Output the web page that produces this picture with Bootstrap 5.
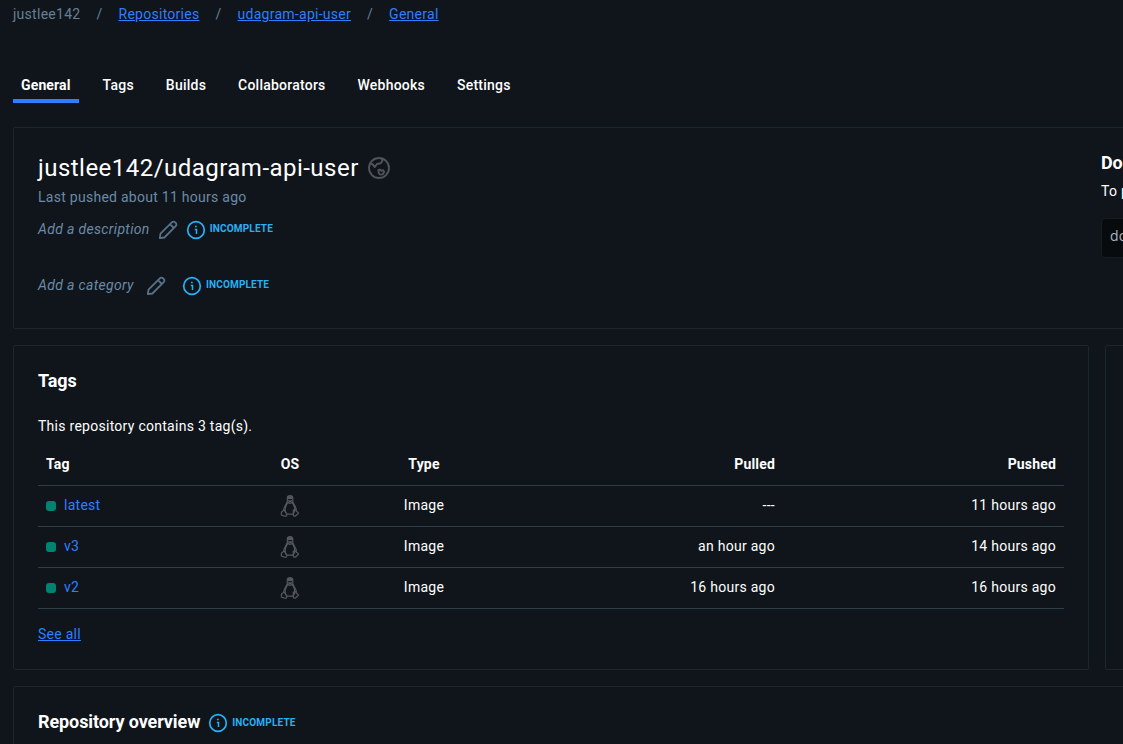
<!DOCTYPE html>
<html lang="en" data-bs-theme="dark">
<head>
<meta charset="utf-8">
<meta name="viewport" content="width=device-width, initial-scale=1">
<title>justlee142/udagram-api-user</title>
<link href="https://cdn.jsdelivr.net/npm/bootstrap@5.3.0/dist/css/bootstrap.min.css" rel="stylesheet">
<style>
html, body { overflow: hidden; height: 100%; }
body { background: #10151b; color: #fff; font: 400 14px/20px Roboto, "Liberation Sans", sans-serif; letter-spacing: .27px; }
.page { width: 1480px; padding: 4px 0 0 13px; }
a { color: #2e7fff; }
.crumbs { color: #677f93; gap: 16px; }
.tabs { gap: 16px; margin-top: 45px; font-weight: 500; }
.tabs .nav-link { color: #fff; padding: 6px 8px 4px; border-bottom: 4px solid transparent; letter-spacing: .23px; }
.tabs .nav-link.active { border-color: #2e7fff; font-weight: 700; letter-spacing: .14px; }
.panel { border: 1px solid #1c262d; border-radius: 2px; padding: 24px; background: #10151b; }
.head-panel { height: 202px; margin-top: 24px; }
.head-main { width: 1063px; }
.repo-name { font-size: 24px; line-height: 32px; font-weight: 400; letter-spacing: .47px; }
.muted { color: #6b8aa7; }
.pen-icon { color: #587187; }
em { letter-spacing: .34px; }
.pushed { margin-top: 3px; }
.desc { margin-top: 11px; }
.categ { margin-top: 34px; }
.low { margin-top: 2px; }
.flag { color: #27b1f5; font-size: 10px; font-weight: 700; letter-spacing: .17px; gap: 4px; }
h2 { font-size: 18px; line-height: 24px; font-weight: 700; letter-spacing: -.1px; }
.side-title { margin: -1px 0 6px; }
.push-hint { margin: 0 0 17px; }
.cmd { background: #080b0e; border: 1px solid #171d22; border-radius: 4px; height: 40px; padding: 7px 8px; color: #a9b6c2; font: 14px/20px "Open Sans", sans-serif; width: 330px; }
.tags-panel { width: 1076px; height: 325px; }
.tags-panel h2 { margin: -1px 0 23px; }
.side-panel { width: 345px; }
.overview h2 { margin: -1px 0 1px; }
.tag-table { width: 1026px; table-layout: fixed; border-collapse: collapse; }
.tag-table th, .tag-table td { height: 41px; padding: 0 8px 2px; border-bottom: 1px solid #2b3e4a; vertical-align: middle; font-weight: 500; letter-spacing: .27px; }
.tag-table th { padding-bottom: 0; font-weight: 700; letter-spacing: .17px; }
.tag-table td { font-weight: 400; }
.dot { width: 10px; height: 10px; border-radius: 3px; background: #008471; margin: 2px 8px 0 0; }
.see-all { margin-top: 15px; }
svg { display: block; flex: none; fill: none; stroke: currentColor; }
.tux { color: #55585c; margin: 3px auto 0; }
</style>
</head>
<body>
<svg width="0" height="0" class="position-absolute" aria-hidden="true">
  <symbol id="pen" viewBox="0 0 20 20"><path d="M1.8 18.2l.7-4.6L13.8 2.3a2.3 2.3 0 0 1 3.3 0l.6.6a2.3 2.3 0 0 1 0 3.3L6.4 17.5zM12 4.1l3.9 3.9" stroke-width="1.8" stroke-linejoin="round"/></symbol>
  <symbol id="info" viewBox="0 0 20 20"><circle cx="10" cy="10" r="8.3" stroke-width="1.7"/><path d="M8.8 9.400h1.700V14M9 6.600h1.700" stroke-width="1.500"/></symbol>
  <symbol id="tux" viewBox="0 0 20 24"><g stroke-width="1.2" stroke-linejoin="round"><path d="M7.3 8V4.3C7.3 2.500 8.300 1.500 10 1.500s2.800 1 2.800 2.800V8c.6 2 3.600 4.500 3.600 8.600M7.300 8c-.6 2-3.700 4.500-3.700 8.400"/><path d="M7.600 8.300c1.600 1.300 3.200 1.300 4.900 0 .7 2.300 2.300 3.500 2.300 7.200 0 2-.8 3.500-1.700 4.600H7c-1.200-1.200-1.900-2.600-1.900-4.600 0-3.200 1.800-5 2.500-7.200z"/><path d="M4 15.800l2.700 4.200c.5 1.500-.5 2.400-1.800 2.200l-3.400-1.100c-.6-.5 0-1.600-.1-2.700 0-.8 1.500-.7 2.600-2.600zM15.800 15.800c.3 2 1.700 2 2.700 3-.2 1.200-1.700 1.600-2.800 3-1 .8-2.400.4-2.400-1V16z"/><path d="M7.500 3.600h5" stroke-width="3"/><path d="M8.300 6.500L10 7.600l1.800-1.100" stroke-width="1.500"/></g></symbol>
</svg>
<div class="page">
  <div class="crumbs d-flex"><span>justlee142</span><span>/</span><a href="#">Repositories</a><span>/</span><a href="#">udagram-api-user</a><span>/</span><a href="#">General</a></div>
  <nav class="nav tabs">
    <a class="nav-link active" href="#">General</a><a class="nav-link" href="#">Tags</a><a class="nav-link" href="#">Builds</a><a class="nav-link" href="#">Collaborators</a><a class="nav-link" href="#">Webhooks</a><a class="nav-link" href="#">Settings</a>
  </nav>

  <section class="panel head-panel d-flex">
    <div class="head-main">
      <div class="d-flex align-items-center">
        <h1 class="repo-name mb-0">justlee142/udagram-api-user</h1>
        <svg class="ms-2" style="color:#505358" width="24" height="24" viewBox="0 0 24 24" stroke-width="1.9" stroke-linejoin="round"><circle cx="12" cy="12" r="10"/><path d="M2.800 7.500l2.700.6 2.200 3L10 8l3.800-.7 1.500-2.300-.5-2.700M11.500 14l1.800-.2 1.200 1 1.800-.6.8 1.700-1.500 2.500-2.300.2-1.600-1.600z"/></svg>
      </div>
      <div class="muted pushed">Last pushed about 11 hours ago</div>
      <div class="d-flex align-items-center desc">
        <em class="muted me-2">Add a description</em>
        <svg class="pen-icon low" width="20" height="20"><use href="#pen"/></svg>
        <div class="flag d-flex align-items-center ms-2"><svg class="low" width="20" height="20"><use href="#info"/></svg><span>INCOMPLETE</span></div>
      </div>
      <div class="d-flex align-items-center categ">
        <em class="muted me-2 pe-1">Add a category</em>
        <svg class="pen-icon low" width="20" height="20"><use href="#pen"/></svg>
        <div class="flag d-flex align-items-center ms-3"><svg class="low" width="20" height="20"><use href="#info"/></svg><span>INCOMPLETE</span></div>
      </div>
    </div>
    <div>
      <h2 class="side-title text-nowrap">Docker commands</h2>
      <p class="push-hint text-nowrap">To push a new tag to this repository,</p>
      <div class="cmd text-nowrap">docker push justlee142/udagram-api-user</div>
    </div>
  </section>

  <div class="d-flex gap-3 my-3">
    <section class="panel tags-panel">
      <h2>Tags</h2>
      <p class="mb-2">This repository contains 3 tag(s).</p>
      <table class="tag-table">
        <colgroup><col width="208"><col width="88"><col width="180"><col width="269"><col width="281"></colgroup>
        <thead><tr><th>Tag</th><th class="text-center">OS</th><th class="text-center">Type</th><th class="text-end">Pulled</th><th class="text-end">Pushed</th></tr></thead>
        <tbody>
          <tr><td><div class="d-flex align-items-center"><i class="dot"></i><a href="#" class="text-decoration-none">latest</a></div></td><td><svg class="tux" width="20" height="24"><use href="#tux"/></svg></td><td class="text-center">Image</td><td class="text-end">---</td><td class="text-end">11 hours ago</td></tr>
          <tr><td><div class="d-flex align-items-center"><i class="dot"></i><a href="#" class="text-decoration-none">v3</a></div></td><td><svg class="tux" width="20" height="24"><use href="#tux"/></svg></td><td class="text-center">Image</td><td class="text-end">an hour ago</td><td class="text-end">14 hours ago</td></tr>
          <tr><td><div class="d-flex align-items-center"><i class="dot"></i><a href="#" class="text-decoration-none">v2</a></div></td><td><svg class="tux" width="20" height="24"><use href="#tux"/></svg></td><td class="text-center">Image</td><td class="text-end">16 hours ago</td><td class="text-end">16 hours ago</td></tr>
        </tbody>
      </table>
      <a href="#" class="d-inline-block see-all">See all</a>
    </section>
    <section class="panel side-panel"></section>
  </div>

  <section class="panel overview">
    <div class="d-flex align-items-center"><h2>Repository overview</h2>
      <div class="flag d-flex align-items-center ms-2"><svg width="20" height="20"><use href="#info"/></svg><span>INCOMPLETE</span></div>
    </div>
  </section>
</div>
<script src="https://cdn.jsdelivr.net/npm/bootstrap@5.3.0/dist/js/bootstrap.bundle.min.js"></script>
</body>
</html>
